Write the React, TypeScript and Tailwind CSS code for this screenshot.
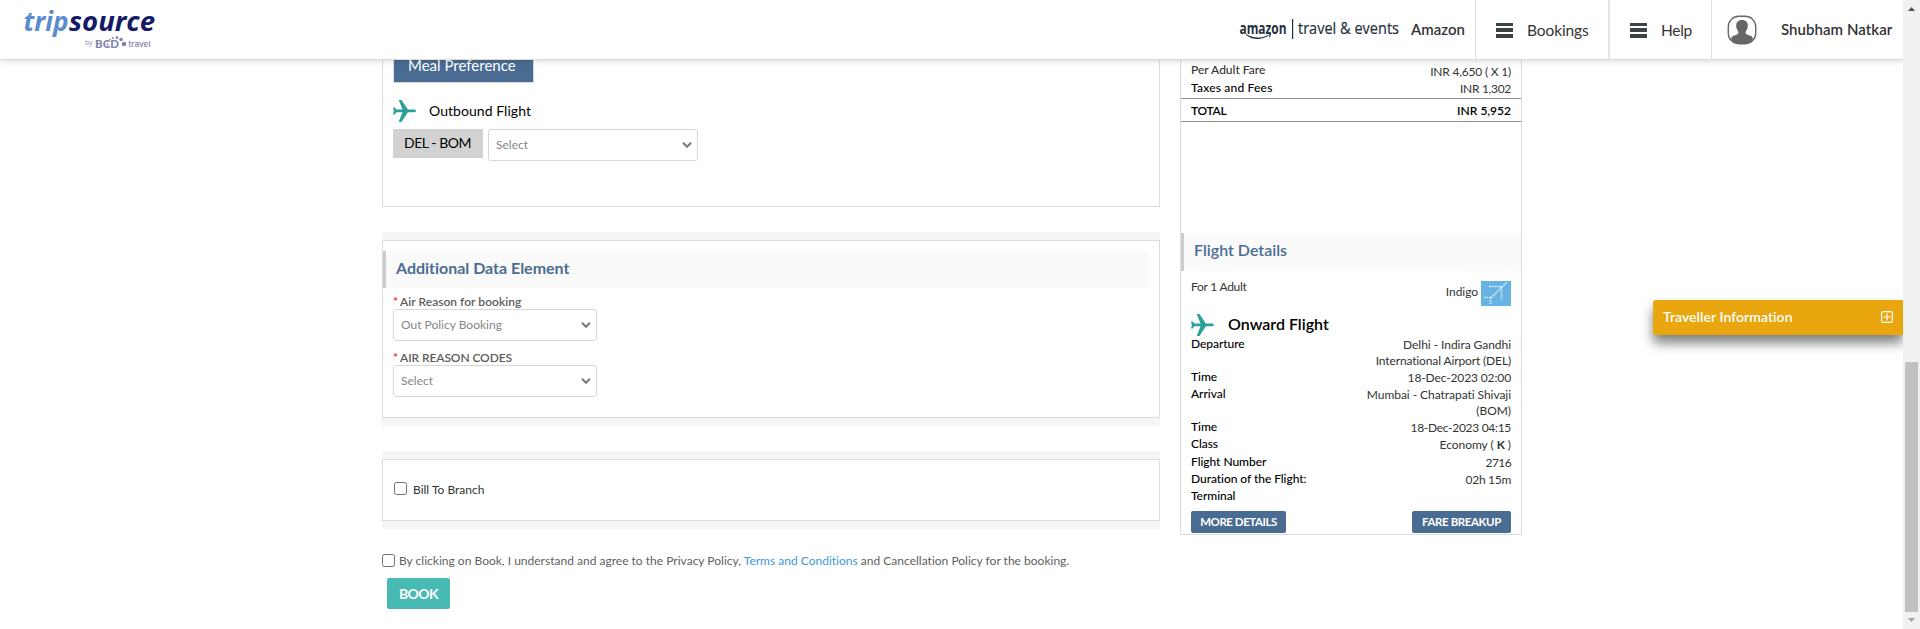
import React from 'react';

function Plane({ className = '' }: { className?: string }) {
  return (
    <svg viewBox="0 0 23 22" className={`h-[22px] w-[23px] shrink-0 ${className}`} fill="#2aa198">
      <path d="M0 7.500h1.600l1.800 2.100H9.500L5.700 0h2.800l6.400 9.600h6.400q1.700.300 1.700 1.300t-1.700 1.300h-6.400L8.500 22H5.700l3.800-9.800H3.400l-1.800 2.200H0l.9-3.500z" />
    </svg>
  );
}

function Bars() {
  return (
    <div className="flex w-[17px] flex-col gap-[2px]">
      <div className="h-[3px] bg-[#3d4345]" />
      <div className="h-[4px] bg-[#3d4345]" />
      <div className="h-[4px] bg-[#3d4345]" />
    </div>
  );
}

function SelectBox({ label, width }: { label: string; width: string }) {
  return (
    <div className={`flex h-8 items-center justify-between rounded-[3px] border border-[#d8d8d8] bg-white pr-[5px] pl-[7px] text-[#868686] ${width}`}>
      <span>{label}</span>
      <svg viewBox="0 0 10 8" className="h-2 w-[10px]" fill="none" stroke="#7c7c7c" strokeWidth="2.2">
        <path d="M1 1.8l4 3.9 4-3.9" />
      </svg>
    </div>
  );
}

function Check() {
  return <div className="h-[13px] w-[13px] shrink-0 rounded-[2.5px] border border-[#6f6f6f] bg-white" />;
}

function Row({ label, height, children }: { label: string; height: string; children?: React.ReactNode }) {
  return (
    <div className={`flex justify-between ${height}`}>
      <span className="font-medium text-black">{label}</span>
      <span className="pt-px text-right text-[#333]">{children}</span>
    </div>
  );
}

function TripLogo() {
  return (
    <svg viewBox="0 0 140 44" className="ml-[20px] h-[44px] w-[140px] overflow-visible">
      <g fontFamily="'Open Sans', sans-serif" fontStyle="italic" fontWeight="700" fontSize="26">
        <text x="3.5" y="24" textLength="45" lengthAdjust="spacingAndGlyphs" fill="#5b8cce">trip</text>
        <text x="49" y="24" textLength="86" lengthAdjust="spacingAndGlyphs" fill="#131a66">source</text>
      </g>
      <text x="65" y="37.5" fontFamily="'Open Sans', sans-serif" fontSize="7" fill="#8b8db5">by</text>
      <text x="75" y="41.3" fontFamily="Lato, sans-serif" fontWeight="900" fontSize="11" textLength="24" lengthAdjust="spacingAndGlyphs" fill="#8183ae">BCD</text>
      <g fill="#8183ae">
        <circle cx="87.5" cy="37.5" r="1" />
        <circle cx="90" cy="32.5" r="0.8" />
        <circle cx="92.7" cy="31" r="1" />
        <circle cx="97" cy="30.6" r="1.3" />
        <circle cx="101" cy="32.5" r="1.8" />
        <circle cx="104" cy="37" r="2.3" />
      </g>
      <text x="108.5" y="39.5" fontFamily="Inter, sans-serif" fontWeight="500" fontSize="7.5" textLength="22" lengthAdjust="spacingAndGlyphs" fill="#8183ae">travel</text>
    </svg>
  );
}

function AmazonLogo() {
  return (
    <svg viewBox="0 0 162 24" className="h-6 w-[162px] overflow-visible" fill="#232f3e">
      <text x="0.5" y="15.500" fontFamily="'Open Sans', sans-serif" fontWeight="700" fontSize="15.5" textLength="47" lengthAdjust="spacingAndGlyphs">amazon</text>
      <path d="M7 16c7 4.600 16 4.300 22 .9l.6.9c-7 4.600-17 4-22.900-1.100z" />
      <path d="M27 15.600l4.900-.4c.3 1.700-.5 3.200-1.600 4.200l-.5-.4c.5-.9.8-1.700.6-2.500z" />
      <rect x="53" y="1" width="1.2" height="20" />
      <text x="59" y="15.500" fontFamily="'Open Sans', sans-serif" fontSize="17" textLength="101" lengthAdjust="spacingAndGlyphs" stroke="#232f3e" strokeWidth="0.2">travel &amp; events</text>
    </svg>
  );
}

function Header() {
  return (
    <header className="relative z-10 flex h-[60px] shrink-0 items-stretch justify-between border-b border-[#dcdcdc] bg-white text-[#333] shadow-[0_1px_6px_rgba(0,0,0,0.16)]">
      <div className="pt-[7px]">
        <TripLogo />
      </div>
      <div className="flex">
        <div className="flex w-[236px] pt-[18px]">
          <AmazonLogo />
          <span className="ml-[10px] text-[15px] leading-[22px] font-semibold">Amazon</span>
        </div>
        <div className="flex w-[135px] items-center border-r-2 border-l border-r-[#e3e3e8] border-l-[#dfdfdf] pt-px pl-5">
          <Bars />
          <span className="ml-[14px] text-[15.500px] leading-5 tracking-[-0.1px]">Bookings</span>
        </div>
        <div className="flex w-[102px] items-center border-r border-[#dedee4] pt-px pl-5">
          <Bars />
          <span className="ml-[14px] text-[15.500px] leading-5 tracking-[-0.3px]">Help</span>
        </div>
        <div className="flex w-[191px] items-center pl-[15px]">
          <svg viewBox="0 0 30 30" className="h-[30px] w-[30px]">
            <rect x="1.300" y="1.300" width="27.400" height="27.400" rx="10.500" fill="none" stroke="#666" strokeWidth="1.400" />
            <path fill="#666" d="M15 5c4 0 6 2.500 5.800 6-.1 3-1.500 4.500-2.300 6 0 1.600 1 2.600 3.500 3.300 2.500.700 3.500 1.500 4 3.400Q24 28.500 19 28.500h-8q-5 0-7-4.800c.5-1.900 1.500-2.700 4-3.400 2.500-.700 3.500-1.700 3.500-3.300-.800-1.500-2.200-3-2.300-6C9 7.500 11 5 15 5z" />
          </svg>
          <span className="ml-6 pb-px text-[15px] leading-5 font-semibold tracking-[0.05px]">Shubham Natkar</span>
        </div>
      </div>
    </header>
  );
}

function MainColumn() {
  return (
    <div className="w-[778px]">
      <section className="h-[147px] border border-t-0 border-[#dcdcdc] px-[10px]">
        <div className="flex h-[23px] w-[141px] border border-t-0 border-[#d8dbe0] bg-[#4a6c92] pl-[14px] text-[15px] leading-[10px] text-white">
          Meal Preference
        </div>
        <div className="mt-[17px] flex h-[22px] items-center">
          <Plane />
          <span className="ml-[13px] pb-px text-[14px] leading-5 tracking-[0.05px] text-black">Outbound Flight</span>
        </div>
        <div className="mt-[7px] flex items-start gap-[5px]">
          <div className="h-[29px] w-[90px] bg-[#d2d2d2] pl-[11px] text-[14px] leading-[28px] tracking-[-0.45px] text-black">DEL - BOM</div>
          <SelectBox label="Select" width="w-[210px]" />
        </div>
      </section>

      <section className="mt-[25px] bg-[#f5f5f5] py-2">
        <div className="h-[178px] border border-[#dcdcdc] bg-white pt-[10px] pr-[10px]">
          <h2 className="h-[37px] border-l-[3px] border-[#ccc] bg-[#fafafa] pl-[10px] text-[16px] leading-[33px] font-bold tracking-[-0.02px] text-[#4a6c92]">
            Additional Data Element
          </h2>
          <div className="pl-[10px]">
            <div className="mt-[6px] flex h-[15px] gap-[3px] font-semibold tracking-[0.03px] text-[#5c5c5c]">
              <span className="w-1 font-bold text-[#f33]">*</span>Air Reason for booking
            </div>
            <SelectBox label="Out Policy Booking" width="w-[204px]" />
            <div className="mt-[9px] flex h-[15px] gap-[3px] leading-[15px] font-semibold tracking-[-0.1px] text-[#5c5c5c]">
              <span className="w-1 font-bold text-[#f33]">*</span>AIR REASON CODES
            </div>
            <SelectBox label="Select" width="w-[204px]" />
          </div>
        </div>
      </section>

      <section className="mt-[25px] bg-[#f5f5f5] py-2">
        <div className="flex h-[62px] items-start gap-[6px] border border-[#dcdcdc] bg-white pt-[22px] pl-[11px]">
          <Check />
          <span className="text-[#333]">Bill To Branch</span>
        </div>
      </section>

      <div className="mt-[25px] flex h-[13px] items-center gap-[4px] text-[#5f5f5f]">
        <Check />
        <p className="whitespace-nowrap tracking-[0.01px]">
          By clicking on Book, I understand and agree to the Privacy Policy, <a className="text-[#3f97d8]">Terms and Conditions</a> and Cancellation Policy for the booking.
        </p>
      </div>
      <button className="mt-[11px] ml-[5px] block h-[31px] w-[63px] rounded-[2px] bg-[#48bab4] text-[14px] leading-[29px] font-bold tracking-[-0.6px] text-white">
        BOOK
      </button>
    </div>
  );
}

function SideColumn() {
  return (
    <aside className="ml-5 flex h-[475px] w-[342px] flex-col border border-t-0 border-[#dcdcdc] pt-[2px]">
      <div className="flex h-[18px] justify-between px-[10px] text-[#333]">
        <span className="font-medium">Per Adult Fare</span>
        <span className="pt-[2px] tracking-[-0.2px]">INR 4,650 ( X 1)</span>
      </div>
      <div className="flex h-[18px] justify-between px-[10px]">
        <span className="font-medium tracking-[0.2px] text-black">Taxes and Fees</span>
        <span className="pt-px tracking-[-0.3px] text-[#333]">INR 1,302</span>
      </div>
      <div className="flex h-6 justify-between border-y border-[#8f918f] px-[10px] leading-[24px] font-semibold text-black">
        <span className="tracking-[-0.3px]">TOTAL</span>
        <span>INR 5,952</span>
      </div>
      <h2 className="mt-[111px] h-[38px] border-l-[3px] border-[#ccc] bg-[#fafafa] pl-[10px] text-[16px] leading-[34px] font-semibold text-[#4a6c92]">
        Flight Details
      </h2>
      <div className="px-[10px] tracking-[-0.05px]">
        <div className="mt-[8px] flex h-[34px] justify-between text-[#333]">
          <span className="tracking-[-0.25px]">For 1 Adult</span>
          <div className="mt-[2px] flex items-start gap-[3px]">
            <span className="pt-[3px]">Indigo</span>
            <svg viewBox="0 0 30 25" className="h-[25px] w-[30px]">
              <rect width="30" height="25" fill="#67b3e2" />
              <path d="M8 5.500H20M20.500 5.500V18.500M25.500 1.500l-15 15M3 16.500h7M9.500 16.500V23" fill="none" stroke="#d8eefa" strokeWidth="1.700" strokeDasharray="1.600 0.900" />
            </svg>
          </div>
        </div>
        <div className="flex h-[23px] items-center">
          <Plane />
          <span className="ml-[14px] pb-[2px] text-[16px] leading-5 font-semibold tracking-normal text-black">Onward Flight</span>
        </div>
        <div className="leading-[16px]">
          <Row label="Departure" height="h-[33px]">Delhi - Indira Gandhi<br /><span className="tracking-[-0.13px]">International Airport (DEL)</span></Row>
          <Row label="Time" height="h-[17px]"><span className="tracking-[-0.13px]">18-Dec-2023 02:00</span></Row>
          <Row label="Arrival" height="h-[33px]">Mumbai - Chatrapati Shivaji<br />(BOM)</Row>
          <Row label="Time" height="h-[17px]"><span className="tracking-[-0.3px]">18-Dec-2023 04:15</span></Row>
          <Row label="Class" height="h-[18px]">Economy ( <b>K</b> )</Row>
          <Row label="Flight Number" height="h-[17px]"><span className="tracking-[-0.6px]">2716</span></Row>
          <Row label="Duration of the Flight:" height="h-[17px]"><span className="tracking-[-0.3px]">02h 15m</span></Row>
          <Row label="Terminal" height="h-[23px]" />
        </div>
        <div className="flex justify-between text-[11.5px] leading-[20px] font-bold text-white">
          <button className="h-[22px] w-[95px] rounded-[2px] bg-[#4a6c92] tracking-[-0.45px]">MORE DETAILS</button>
          <button className="h-[22px] w-[99px] rounded-[2px] bg-[#4a6c92] tracking-[-0.4px]">FARE BREAKUP</button>
        </div>
      </div>
    </aside>
  );
}

export default function App() {
  return (
    <div className="relative flex h-[629px] w-full overflow-hidden bg-white font-['Lato',sans-serif] text-[12px] leading-[16px]">
      <div className="relative flex min-w-0 flex-1 flex-col overflow-hidden">
        <Header />
        <main className="flex pl-[382px]">
          <MainColumn />
          <SideColumn />
        </main>
        <div className="absolute top-[300px] right-0 flex h-[35px] w-[250px] items-center justify-between rounded-l-[3px] bg-[#e9a60e] pr-[10px] pl-[10px] text-[14px] font-semibold text-white shadow-[0_8px_12px_rgba(0,0,0,0.5)]">
          <span className="pb-px tracking-[0.05px]">Traveller Information</span>
          <svg viewBox="0 0 12 12" className="mb-[2px] h-3 w-3" fill="none" stroke="#fff" strokeWidth="1.200">
            <rect x="0.600" y="0.600" width="10.800" height="10.800" rx="1.500" />
            <path d="M6 2.500v7M2.500 6h7" />
          </svg>
        </div>
      </div>
      <div className="flex w-[17px] shrink-0 flex-col items-center justify-between bg-[#f1f1f1] pt-[7px] pb-[7px]">
        <svg viewBox="0 0 7 4" className="h-1 w-[7px]" fill="#505050"><path d="M0 4l3.500-4L7 4z" /></svg>
        <div className="mt-auto mb-[6px] h-[250px] w-[13px] bg-[#c1c1c1]" />
        <svg viewBox="0 0 7 4" className="h-1 w-[7px]" fill="#a3a3a3"><path d="M0 0l3.500 4L7 0z" /></svg>
      </div>
    </div>
  );
}
